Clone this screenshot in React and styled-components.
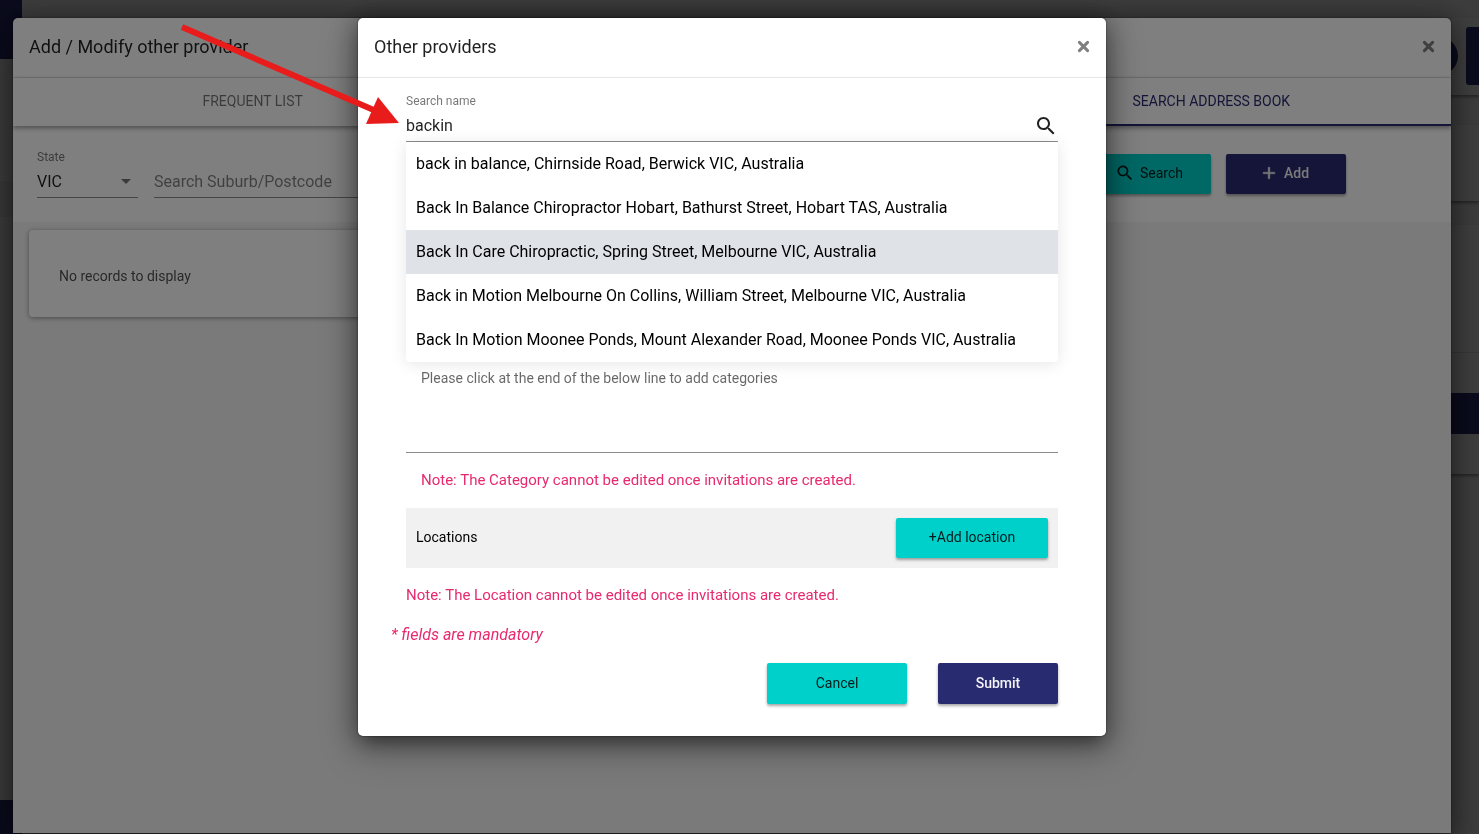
import React from 'react';
import { useState } from 'react';
import styled, { createGlobalStyle, css } from 'styled-components';

const GlobalStyle = createGlobalStyle`
  * {
    box-sizing: border-box;
  }
  html,
  body,
  #root {
    height: 100%;
  }
  body {
    margin: 0;
    overflow: hidden;
    background-color: #f0f0f0;
    color: rgba(0, 0, 0, 0.87);
    font-family: Roboto, 'Liberation Sans', sans-serif;
    font-size: 14px;
  }
  button,
  input,
  select,
  textarea {
    font-family: inherit;
  }
`;

const navy = '#282b70';
const teal = '#00d0ca';
const pink = '#e8296d';

/* Page behind the dialogs */
const Page = styled.div`
  display: flex;
  justify-content: space-between;
  height: 100%;
`;

const Sidebar = styled.div`
  display: flex;
  flex-direction: column;
  width: 22px;
`;

const SidebarBlock = styled.div`
  height: ${(props) => props.$height}px;
  background-color: ${(props) => props.$color || 'transparent'};
`;

const SidebarSpace = styled.div`
  flex: 1;
`;

const Rail = styled.div`
  display: flex;
  flex-direction: column;
  width: 64px;
  padding-top: 18px;
`;

const RailCard = styled.div`
  display: flex;
  flex-direction: column;
  height: ${(props) => props.$height}px;
  margin-bottom: ${(props) => props.$gap}px;
  background-color: #fafafa;
  box-shadow: 0 2px 3px rgba(0, 0, 0, 0.4);
`;

const RailActions = styled.div`
  display: flex;
  align-items: center;
  gap: 8px;
  padding-top: 9px;
  margin-left: 5px;
`;

const RailAvatar = styled.div`
  width: 38px;
  height: 38px;
  border-radius: 50%;
  background-color: ${navy};
`;

const RailButton = styled.div`
  flex: 1;
  height: 58px;
  border-radius: 3px 0 0 3px;
  background-color: ${navy};
`;

const RailSection = styled.div`
  height: 128px;
  margin-bottom: 40px;
  border-bottom: 1px solid #dcdcdc;
`;

const RailBar = styled.div`
  height: 41px;
  background-color: ${navy};
`;

/* Dialogs */
const Backdrop = styled.div`
  position: fixed;
  inset: 0;
  display: flex;
  justify-content: center;
  align-items: flex-start;
  padding: 18px 28px 1px 13px;
  background-color: rgba(0, 0, 0, 0.5);
`;

const Dialog = styled.section`
  display: flex;
  flex-direction: column;
  width: 100%;
  background-color: #fff;
  overflow: hidden;
  box-shadow:
    0 11px 15px -7px rgba(0, 0, 0, 0.3),
    0 12px 38px 3px rgba(0, 0, 0, 0.24),
    0 3px 24px 4px rgba(0, 0, 0, 0.3),
    0 0 2px rgba(0, 0, 0, 0.6);
  ${(props) =>
    props.$small
      ? css`
          max-width: 748px;
          border-radius: 5px;
        `
      : css`
          height: 100%;
          border-radius: 5px 5px 0 0;
        `}
`;

const DialogHeader = styled.header`
  display: flex;
  justify-content: space-between;
  align-items: center;
  height: 60px;
  flex-shrink: 0;
  padding: 0 16px 2px;
  border-bottom: 1px solid #e5e5e5;
`;

const DialogTitle = styled.h1`
  margin: 0;
  font-size: 18px;
  font-weight: 400;
  line-height: 24px;
`;

const CloseButton = styled.button`
  display: flex;
  padding: 0;
  border: none;
  background: none;
  color: #7f7f7f;
  cursor: pointer;
`;

const Tabs = styled.nav`
  display: grid;
  grid-template-columns: repeat(3, 1fr);
  flex-shrink: 0;
  z-index: 1;
  box-shadow: 0 2px 5px rgba(0, 0, 0, 0.4);
`;

const Tab = styled.button`
  grid-column: ${(props) => props.$column};
  height: 48px;
  padding: 0;
  border: none;
  border-bottom: 2px solid ${(props) => (props.$active ? navy : 'transparent')};
  background-color: #fff;
  color: ${(props) => (props.$active ? navy : 'rgba(0, 0, 0, 0.54)')};
  font-size: 14px;
  text-transform: uppercase;
  cursor: pointer;
`;

const Filters = styled.div`
  display: flex;
  align-items: flex-start;
  gap: 16px;
  flex-shrink: 0;
  height: 96px;
  padding: 24px 105px 0 24px;
`;

const Field = styled.div`
  display: flex;
  flex-direction: column;
  flex: ${(props) => (props.$width ? `0 0 ${props.$width}px` : 1)};
`;

const FieldLabel = styled.label`
  height: 14px;
  color: rgba(0, 0, 0, 0.54);
  font-size: 12px;
  line-height: 14px;
`;

const FieldRow = styled.div`
  display: flex;
  align-items: center;
  height: 34px;
  padding-top: 2px;
  border-bottom: 1px solid #8c8c8c;
`;

const fieldText = css`
  flex: 1;
  width: 100%;
  min-width: 0;
  height: 30px;
  padding: 0;
  border: none;
  outline: none;
  background: none;
  color: rgba(0, 0, 0, 0.87);
  font-size: 16px;
  line-height: 20px;
`;

const Input = styled.input`
  ${fieldText}
  &::placeholder {
    color: rgba(0, 0, 0, 0.5);
    opacity: 1;
  }
`;

const Select = styled.select`
  ${fieldText}
  appearance: none;
`;

const Arrow = styled.svg`
  margin-right: 7px;
  fill: rgba(0, 0, 0, 0.54);
`;

const FilterButtons = styled.div`
  display: flex;
  gap: 15px;
  padding-top: 4px;
`;

const Button = styled.button`
  display: flex;
  justify-content: center;
  align-items: center;
  gap: 5px;
  width: ${(props) => props.$width}px;
  min-height: 40px;
  padding: 0 0 2px;
  border: none;
  border-radius: 2px;
  background-color: ${(props) => (props.$primary ? navy : teal)};
  box-shadow: 0 2px 3px rgba(0, 0, 0, 0.35);
  color: ${(props) => (props.$primary ? '#f4f4f8' : 'rgba(0, 0, 0, 0.87)')};
  font-size: 14px;
  font-weight: ${(props) => (props.$primary ? 500 : 400)};
  cursor: pointer;
  svg {
    margin-left: -4px;
  }
`;

const Results = styled.div`
  display: grid;
  grid-template-columns: 1fr 1fr;
  align-items: start;
  flex: 1;
  padding: 8px 16px;
  background-color: #f4f4f4;
`;

const ResultCard = styled.div`
  padding: 36px 30px 31px;
  border-radius: 4px;
  background-color: #fff;
  box-shadow: 0 1px 5px rgba(0, 0, 0, 0.4);
  color: rgba(0, 0, 0, 0.7);
  line-height: 20px;
`;

const DialogBody = styled.form`
  display: flex;
  flex-direction: column;
  padding: 16px 48px 32px;
`;

const SearchButton = styled.button`
  display: flex;
  padding: 0;
  border: none;
  background: none;
  color: rgba(0, 0, 0, 0.87);
  cursor: pointer;
`;

const Suggestions = styled.ul`
  margin: 0;
  padding: 0;
  list-style: none;
  border-radius: 0 0 4px 4px;
  background-color: #fff;
  box-shadow: 0 2px 16px rgba(0, 0, 0, 0.1);
`;

const Suggestion = styled.li`
  padding: 0 10px;
  background-color: ${(props) => (props.$selected ? '#dfe2e7' : '#fff')};
  color: #000;
  font-size: 16px;
  line-height: 44px;
  &:last-child {
    border-radius: 0 0 4px 4px;
  }
`;

const CategoryLabel = styled.label`
  padding: 6px 15px 0;
  color: rgba(0, 0, 0, 0.6);
  font-size: 14px;
  line-height: 20px;
`;

const CategoryInput = styled.textarea`
  display: block;
  height: 65px;
  padding: 8px 15px;
  border: none;
  border-bottom: 1px solid #8c8c8c;
  outline: none;
  resize: none;
`;

const Note = styled.p`
  margin: 0;
  padding: ${(props) => (props.$indent ? '17px 15px 18px' : '17px 0 0')};
  color: ${pink};
  font-size: 15px;
  line-height: 20px;
`;

const LocationBar = styled.div`
  display: flex;
  justify-content: space-between;
  align-items: center;
  height: 60px;
  padding: 0 10px;
  background-color: #f1f1f1;
`;

const LocationTitle = styled.span`
  padding-bottom: 2px;
  color: #000;
`;

const Mandatory = styled.em`
  margin: 20px 0 18px -15px;
  color: ${pink};
  font-size: 16px;
  line-height: 20px;
`;

const Actions = styled.div`
  display: flex;
  justify-content: flex-end;
  gap: 31px;
  height: 41px;
`;

const Pointer = styled.svg`
  position: fixed;
  top: 20px;
  left: 176px;
  pointer-events: none;
`;

const CloseIcon = () => (
  <svg width="13" height="13" viewBox="0 0 13 13" stroke="currentColor" strokeWidth="3" strokeLinecap="round">
    <path d="M2.4 2.4L10.6 10.6M10.6 2.4L2.4 10.6" />
  </svg>
);

const SearchIcon = ({ size = 24 }) => (
  <svg width={size} height={size} viewBox="0 0 24 24" fill="currentColor">
    <path d="M15.5 14h-.79l-.28-.27C15.41 12.59 16 11.11 16 9.5 16 5.91 13.09 3 9.5 3S3 5.91 3 9.5 5.91 16 9.5 16c1.61 0 3.09-.59 4.23-1.57l.27.28v.79l5 4.99L20.49 19l-4.99-5zm-6 0C7.01 14 5 11.99 5 9.5S7.01 5 9.5 5 14 7.01 14 9.5 11.99 14 9.5 14z" />
  </svg>
);

const AddIcon = () => (
  <svg width="20" height="20" viewBox="0 0 24 24" fill="currentColor">
    <path d="M19 13h-6v6h-2v-6H5v-2h6V5h2v6h6v2z" stroke="currentColor" strokeWidth="0.5" />
  </svg>
);

const suggestions = [
  'back in balance, Chirnside Road, Berwick VIC, Australia',
  'Back In Balance Chiropractor Hobart, Bathurst Street, Hobart TAS, Australia',
  'Back In Care Chiropractic, Spring Street, Melbourne VIC, Australia',
  'Back in Motion Melbourne On Collins, William Street, Melbourne VIC, Australia',
  'Back In Motion Moonee Ponds, Mount Alexander Road, Moonee Ponds VIC, Australia',
];

const Background = () => (
  <Page>
    <Sidebar>
      <SidebarBlock $height={59} $color={navy} />
      <SidebarBlock $height={122} />
      <SidebarBlock $height={36} $color="#e0e0e0" />
      <SidebarSpace />
      <SidebarBlock $height={34} $color={navy} />
    </Sidebar>
    <Rail>
      <RailCard $height={77} $gap={30}>
        <RailActions>
          <RailAvatar />
          <RailButton />
        </RailActions>
      </RailCard>
      <RailCard $height={76} $gap={24} />
      <RailCard $height={249} $gap={0}>
        <RailSection />
        <RailBar />
      </RailCard>
    </Rail>
  </Page>
);

const AddressBookDialog = () => (
  <Backdrop>
    <Dialog>
      <DialogHeader>
        <DialogTitle>Add / Modify other provider</DialogTitle>
        <CloseButton type="button" aria-label="Close">
          <CloseIcon />
        </CloseButton>
      </DialogHeader>
      <Tabs>
        <Tab type="button" $column={1}>Frequent list</Tab>
        <Tab type="button" $column={3} $active>Search address book</Tab>
      </Tabs>
      <Filters>
        <Field $width={101}>
          <FieldLabel htmlFor="state">State</FieldLabel>
          <FieldRow>
            <Select id="state" defaultValue="VIC">
              <option value="VIC">VIC</option>
            </Select>
            <Arrow width="10" height="5" viewBox="0 0 10 5">
              <path d="M0 0h10L5 5z" />
            </Arrow>
          </FieldRow>
        </Field>
        <Field>
          <FieldLabel htmlFor="suburb" />
          <FieldRow>
            <Input id="suburb" placeholder="Search Suburb/Postcode" />
          </FieldRow>
        </Field>
        <FilterButtons>
          <Button type="button" $width={120}>
            <SearchIcon size={20} />
            Search
          </Button>
          <Button type="button" $width={120} $primary>
            <AddIcon />
            Add
          </Button>
        </FilterButtons>
      </Filters>
      <Results>
        <ResultCard>No records to display</ResultCard>
      </Results>
    </Dialog>
  </Backdrop>
);

const ProviderDialog = () => {
  const [name, setName] = useState('backin');

  const handleSubmit = (event) => {
    event.preventDefault();
  };

  return (
    <Backdrop>
      <Dialog $small>
        <DialogHeader>
          <DialogTitle as="h2">Other providers</DialogTitle>
          <CloseButton type="button" aria-label="Close">
            <CloseIcon />
          </CloseButton>
        </DialogHeader>
        <DialogBody onSubmit={handleSubmit}>
          <Field>
            <FieldLabel htmlFor="name">Search name</FieldLabel>
            <FieldRow>
              <Input id="name" value={name} onChange={(e) => setName(e.target.value)} />
              <SearchButton type="button" aria-label="Search">
                <SearchIcon />
              </SearchButton>
            </FieldRow>
          </Field>
          <Suggestions>
            {suggestions.map((item, index) => (
              <Suggestion key={item} $selected={index === 2}>
                {item}
              </Suggestion>
            ))}
          </Suggestions>
          <CategoryLabel htmlFor="category">
            Please click at the end of the below line to add categories
          </CategoryLabel>
          <CategoryInput id="category" />
          <Note $indent>Note: The Category cannot be edited once invitations are created.</Note>
          <LocationBar>
            <LocationTitle>Locations</LocationTitle>
            <Button type="button" $width={152}>+Add location</Button>
          </LocationBar>
          <Note>Note: The Location cannot be edited once invitations are created.</Note>
          <Mandatory>* fields are mandatory</Mandatory>
          <Actions>
            <Button type="button" $width={140}>Cancel</Button>
            <Button type="submit" $width={120} $primary>Submit</Button>
          </Actions>
        </DialogBody>
      </Dialog>
    </Backdrop>
  );
};

const App = () => (
  <>
    <GlobalStyle />
    <Background />
    <AddressBookDialog />
    <ProviderDialog />
    <Pointer width="230" height="110" viewBox="0 0 230 110">
      <path d="M6 7L200 91" stroke="#e91c1c" strokeWidth="6" />
      <path d="M202 77L223 103L190 104z" fill="#e91c1c" />
    </Pointer>
  </>
);

export default App;
